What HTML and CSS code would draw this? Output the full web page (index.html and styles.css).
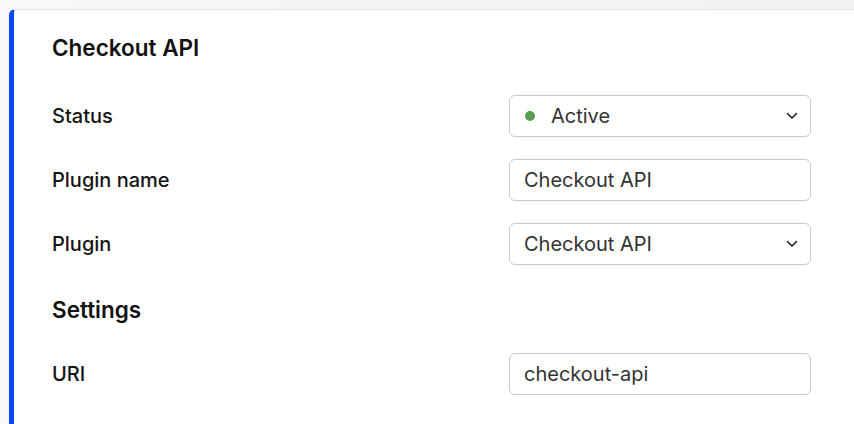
FILE: index.html
```html
<!DOCTYPE html>
<html>
<head>
<meta charset="utf-8">
<link rel="stylesheet" href="styles.css">
</head>
<body>
<div class="page">
  <section class="card">
    <h2 class="card-title">Checkout API</h2>
    <div class="form">
      <div class="row">
        <label class="label">Status</label>
        <div class="field select">
          <span class="dot"></span>
          <span class="value">Active</span>
          <svg class="chev" width="12" height="8" viewBox="0 0 12 8"><path d="M1.5 1.5 L6 6 L10.5 1.5" fill="none" stroke="#222" stroke-width="1.6" stroke-linecap="round" stroke-linejoin="round"/></svg>
        </div>
      </div>
      <div class="row">
        <label class="label">Plugin name</label>
        <div class="field"><span class="value">Checkout API</span></div>
      </div>
      <div class="row">
        <label class="label">Plugin</label>
        <div class="field select">
          <span class="value">Checkout API</span>
          <svg class="chev" width="12" height="8" viewBox="0 0 12 8"><path d="M1.5 1.5 L6 6 L10.5 1.5" fill="none" stroke="#222" stroke-width="1.6" stroke-linecap="round" stroke-linejoin="round"/></svg>
        </div>
      </div>
      <div class="row section-row">
        <h3 class="section-title">Settings</h3>
      </div>
      <div class="row">
        <label class="label">URI</label>
        <div class="field"><span class="value">checkout-api</span></div>
      </div>
    </div>
  </section>
</div>
</body>
</html>
```
FILE: styles.css
```css
* { box-sizing: border-box; }
html, body { margin: 0; padding: 0; }
body {
  width: 854px;
  height: 424px;
  overflow: hidden;
  background: linear-gradient(to right, #f8f8f8, #f1f1f1);
  font-family: Inter, "Noto Sans", sans-serif;
}
.page {
  padding: 9px 0 0 9px;
}
.card {
  background: #fff;
  border-top: 1px solid #e4e4e4;
  border-left: 5px solid #0b46fa;
  border-top-left-radius: 6px;
  height: 415px;
  padding: 23px 43px 0 38px;
}
.card-title {
  margin: 0;
  font-size: 22.5px;
  line-height: 30px;
  font-weight: 600;
  color: #111;
}
.form {
  margin-top: 32px;
  display: flex;
  flex-direction: column;
  gap: 22px;
}
.row {
  display: grid;
  grid-template-columns: 1fr 302px;
  align-items: center;
  height: 42px;
}
.section-row { height: 44px; }
.label {
  font-size: 20px;
  font-weight: 500;
  color: #151515;
}
.section-title {
  margin: 0;
  font-size: 22.5px;
  font-weight: 600;
  color: #111;
}
.field {
  height: 42px;
  border: 1px solid #c9c9c9;
  border-radius: 6px;
  display: flex;
  align-items: center;
  padding: 0 14px;
  font-size: 20px;
  color: #333;
}
.field .value { flex: 1; }
.dot {
  width: 10px;
  height: 10px;
  border-radius: 50%;
  background: #5a9e51;
  margin: 0 16px 0 1px;
}
.chev { margin-right: -2px; }
```
